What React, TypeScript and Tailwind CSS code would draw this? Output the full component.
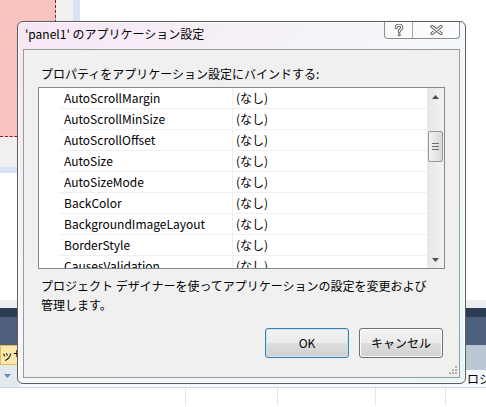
import React from 'react';

const rows = [
  'AutoScrollMargin',
  'AutoScrollMinSize',
  'AutoScrollOffset',
  'AutoSize',
  'AutoSizeMode',
  'BackColor',
  'BackgroundImageLayout',
  'BorderStyle',
  'CausesValidation',
];

const HelpGlyph = () => (
  <svg width="10" height="13" viewBox="0 0 10 13">
    <g fill="none" strokeLinecap="round" strokeLinejoin="round">
      <path d="M2.2 3.6C2.2 2 3.4 1.2 5 1.2S7.8 2.1 7.8 3.6C7.8 5.4 5.2 5.6 5.2 7.6" stroke="#5a5a5a" strokeWidth="3" />
      <path d="M2.2 3.6C2.2 2 3.4 1.2 5 1.2S7.8 2.1 7.8 3.6C7.8 5.4 5.2 5.6 5.2 7.6" stroke="#fff" strokeWidth="1.2" />
    </g>
    <circle cx="5.2" cy="10.8" r="1.5" fill="#5a5a5a" />
    <circle cx="5.2" cy="10.8" r="0.6" fill="#fff" />
  </svg>
);

const CloseGlyph = () => (
  <svg width="13" height="10" viewBox="0 0 13 10">
    <g strokeLinecap="round">
      <path d="M2 1.5L11 8.5M11 1.5L2 8.5" stroke="#5a5a5a" strokeWidth="3.2" />
      <path d="M2 1.5L11 8.5M11 1.5L2 8.5" stroke="#fff" strokeWidth="1.3" />
    </g>
  </svg>
);

const Arrow = ({ down }: { down?: boolean }) => (
  <svg width="7" height="4" viewBox="0 0 7 4">
    <path d={down ? 'M0 0H7L3.5 4Z' : 'M0 4H7L3.5 0Z'} fill="#4d4d4d" />
  </svg>
);

const Dialog = () => (
  <div className="absolute left-[17px] top-[21px] w-[449px] h-[363px] rounded-[6px] border border-[#5c5c5c] bg-gradient-to-br from-[#f6e6f4] via-[#f5f8fb] to-[#e9f7fa] flex flex-col px-[5px] pb-[5px] shadow-[inset_0_0_0_1px_rgba(255,255,255,0.8)]">
    <div className="h-[27px] flex items-start justify-between">
      <span className="pl-[2px] pt-[3px] text-[12px] leading-[18px] text-black">'panel1' のアプリケーション設定</span>
      <div className="flex h-[17px] border border-t-0 border-[#8e8e8e] rounded-b-[4px] bg-white/50">
        <div className="w-[28px] flex items-center justify-center border-r border-[#a6a6a6]">
          <HelpGlyph />
        </div>
        <div className="w-[46px] flex items-center justify-center">
          <CloseGlyph />
        </div>
      </div>
    </div>

    <div className="relative flex-1 border border-[#9a9a9a] bg-[#f0f0f0] flex flex-col text-[12px] text-black">
      <div className="mt-[15px] pl-[17px] h-[18px] leading-[18px]">プロパティをアプリケーション設定にバインドする:</div>

      <div className="mt-[4px] mx-[14px] h-[182px] border border-[#828790] bg-white flex">
        <div className="w-[21px]" />
        <div className="flex-1 overflow-hidden">
          {rows.map((name) => (
            <div key={name} className="h-[21px] flex border-b border-[#f0f0f0]">
              <div className="w-[173px] pl-[4px] leading-[20px] border-r border-[#f0f0f0] whitespace-nowrap">{name}</div>
              <div className="flex-1 pl-[3px] leading-[20px]">(なし)</div>
            </div>
          ))}
        </div>
        <div className="w-[17px] flex flex-col bg-gradient-to-r from-[#e6e6e6] to-[#f2f2f2]">
          <div className="h-[17px] flex items-center justify-center">
            <Arrow />
          </div>
          <div className="h-[26px]" />
          <div className="h-[31px] ml-[1px] w-[15px] rounded-[2px] border border-[#979797] bg-gradient-to-r from-[#f3f3f3] to-[#d9d9d9] flex flex-col items-center justify-center gap-[2px]">
            <div className="w-[7px] h-px bg-[#6f6f6f]" />
            <div className="w-[7px] h-px bg-[#6f6f6f]" />
            <div className="w-[7px] h-px bg-[#6f6f6f]" />
          </div>
          <div className="flex-1" />
          <div className="h-[17px] flex items-center justify-center">
            <Arrow down />
          </div>
        </div>
      </div>

      <div className="mt-[7px] pl-[17px] leading-[19px]">
        プロジェクト デザイナーを使ってアプリケーションの設定を変更および
        <br />
        管理します。
      </div>

      <div className="mt-[14px] flex justify-end gap-[10px] pr-[16px]">
        <button className="w-[84px] h-[30px] rounded-[3px] border border-[#3c7fb1] bg-[linear-gradient(#f2f2f2_0%,#ebebeb_50%,#dddddd_51%,#d1d1d1_100%)] shadow-[inset_0_0_0_1px_#c6e6f8] text-[12px] text-black">
          OK
        </button>
        <button className="w-[84px] h-[30px] rounded-[3px] border border-[#707070] bg-[linear-gradient(#f2f2f2_0%,#ebebeb_50%,#dddddd_51%,#d1d1d1_100%)] shadow-[inset_0_0_0_1px_#fcfcfc] text-[12px] text-black">
          キャンセル
        </button>
      </div>

      <svg className="absolute right-[2px] bottom-[3px]" width="8" height="8" viewBox="0 0 8 8">
        <g fill="#b0b0b0">
          <rect x="6" y="0" width="2" height="2" />
          <rect x="3" y="3" width="2" height="2" />
          <rect x="6" y="3" width="2" height="2" />
          <rect x="0" y="6" width="2" height="2" />
          <rect x="3" y="6" width="2" height="2" />
          <rect x="6" y="6" width="2" height="2" />
        </g>
      </svg>
    </div>
  </div>
);

export default function App() {
  return (
    <div className="relative w-[486px] h-[407px] overflow-hidden bg-white flex flex-col font-['Noto_Sans_CJK_JP',sans-serif]">
      {/* designer surface behind the dialog */}
      <div className="h-[173px] w-[80px] bg-[#d8e4f1]">
        <div className="w-[73px] h-[167px] bg-[#f0f0f0]">
          <div className="w-[56px] h-[137px] bg-[#f6c3bf] border-r border-b border-dashed border-[#8b1a1a]" />
        </div>
      </div>
      <div className="h-[127px]" />
      <div className="h-[8px] bg-[#eceff2]" />
      <div className="h-[9px] bg-[#2c3d53]" />
      <div className="h-[28px] bg-[#4c5f7b]" />
      <div className="h-[42px] flex">
        <div className="w-[20px] bg-[#e3e9ef] flex flex-col">
          <div className="h-[20px] bg-[#fde9ad] border border-[#e2bd5c] text-[12px] leading-[18px] whitespace-nowrap overflow-hidden">ッサ</div>
          <div className="flex-1 flex items-center pl-[4px]">
            <svg width="7" height="4" viewBox="0 0 7 4">
              <path d="M0 0H7L3.5 4Z" fill="#5b8fc7" />
            </svg>
          </div>
        </div>
        <div className="flex-1 flex flex-col">
          <div className="h-[25px] bg-[#bcc7d4]" />
          <div className="h-[17px] bg-[#f4f6f9] pl-[447px] text-[12px] leading-[17px] whitespace-nowrap overflow-hidden">ロジック</div>
        </div>
      </div>
      <div className="h-px bg-[#c9dbea]" />
      <div className="h-[18px] flex">
        <div className="w-[186px] border-r border-[#e6e6e6]" />
        <div className="w-[92px] border-r border-[#e6e6e6]" />
        <div className="w-[98px] border-r border-[#e6e6e6]" />
        <div className="w-[70px] border-r border-[#e6e6e6]" />
      </div>

      <Dialog />
    </div>
  );
}
